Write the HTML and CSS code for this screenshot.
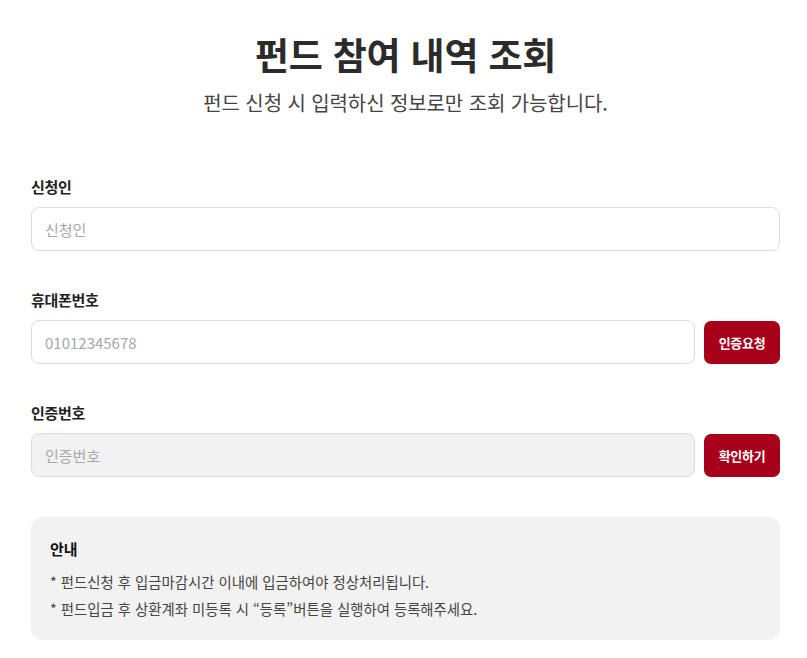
FILE: index.html
```html
<!DOCTYPE html>
<html lang="ko">
<head>
<meta charset="utf-8">
<title>펀드 참여 내역 조회</title>
<link rel="stylesheet" href="styles.css">
</head>
<body>
<main class="page">
  <header class="head">
    <h1 class="title">펀드 참여 내역 조회</h1>
    <p class="subtitle">펀드 신청 시 입력하신 정보로만 조회 가능합니다.</p>
  </header>

  <form class="form">
    <div class="field">
      <label class="label">신청인</label>
      <div class="row">
        <input class="input" type="text" placeholder="신청인">
      </div>
    </div>
    <div class="field">
      <label class="label">휴대폰번호</label>
      <div class="row">
        <input class="input" type="text" placeholder="01012345678">
        <button type="button" class="btn">인증요청</button>
      </div>
    </div>
    <div class="field">
      <label class="label">인증번호</label>
      <div class="row">
        <input class="input input-disabled" type="text" placeholder="인증번호" disabled>
        <button type="button" class="btn">확인하기</button>
      </div>
    </div>
  </form>

  <section class="notice">
    <h2 class="notice-title">안내</h2>
    <p class="notice-line">* 펀드신청 후 입금마감시간 이내에 입금하여야 정상처리됩니다.</p>
    <p class="notice-line">* 펀드입금 후 상환계좌 미등록 시 “등록”버튼을 실행하여 등록해주세요.</p>
  </section>
</main>
</body>
</html>
```
FILE: styles.css
```css
* { box-sizing: border-box; }
html, body { margin: 0; padding: 0; background: #fff; }
body {
  font-family: "Noto Sans CJK KR", "Noto Sans", sans-serif;
  color: #222;
}
.page {
  padding: 26px 27px 0 31px;
}
.head { text-align: center; }
.title {
  margin: 0;
  font-size: 37px;
  font-weight: 700;
  line-height: 56px;
  letter-spacing: -0.2px;
  color: #2b2b2b;
}
.subtitle {
  margin: 7px 0 0;
  font-size: 20px;
  line-height: 28px;
  letter-spacing: -0.1px;
  color: #444;
}
.form {
  margin-top: 59px;
  display: flex;
  flex-direction: column;
  gap: 38px;
}
.field { display: flex; flex-direction: column; gap: 9px; }
.label {
  font-size: 15px;
  font-weight: 700;
  line-height: 22px;
  color: #222;
  letter-spacing: -0.3px;
}
.row { display: flex; align-items: center; gap: 9px; }
.input {
  flex: 1;
  min-width: 0;
  height: 44px;
  border: 1px solid #dcdcdc;
  border-radius: 8px;
  padding: 0 13px;
  font-family: inherit;
  font-size: 15px;
  color: #222;
  background: #fff;
  outline: none;
}
.input::placeholder { color: #a8a8a8; }
.input-disabled { background: #f2f2f2; }
.btn {
  flex: none;
  width: 76px;
  height: 43px;
  border: 0;
  border-radius: 7px;
  background: #a8001a;
  color: #fff;
  font-family: inherit;
  font-size: 13px;
  font-weight: 700;
  letter-spacing: -0.3px;
  padding: 0;
  cursor: pointer;
}
.notice {
  margin-top: 40px;
  background: #f2f2f2;
  border-radius: 12px;
  padding: 21px 19px 18px;
}
.notice-title {
  margin: 0 0 8px;
  font-size: 15px;
  font-weight: 700;
  line-height: 22px;
  color: #111;
}
.notice-line {
  margin: 0;
  font-size: 14.4px;
  line-height: 27px;
  letter-spacing: 0;
  color: #444;
}
```
